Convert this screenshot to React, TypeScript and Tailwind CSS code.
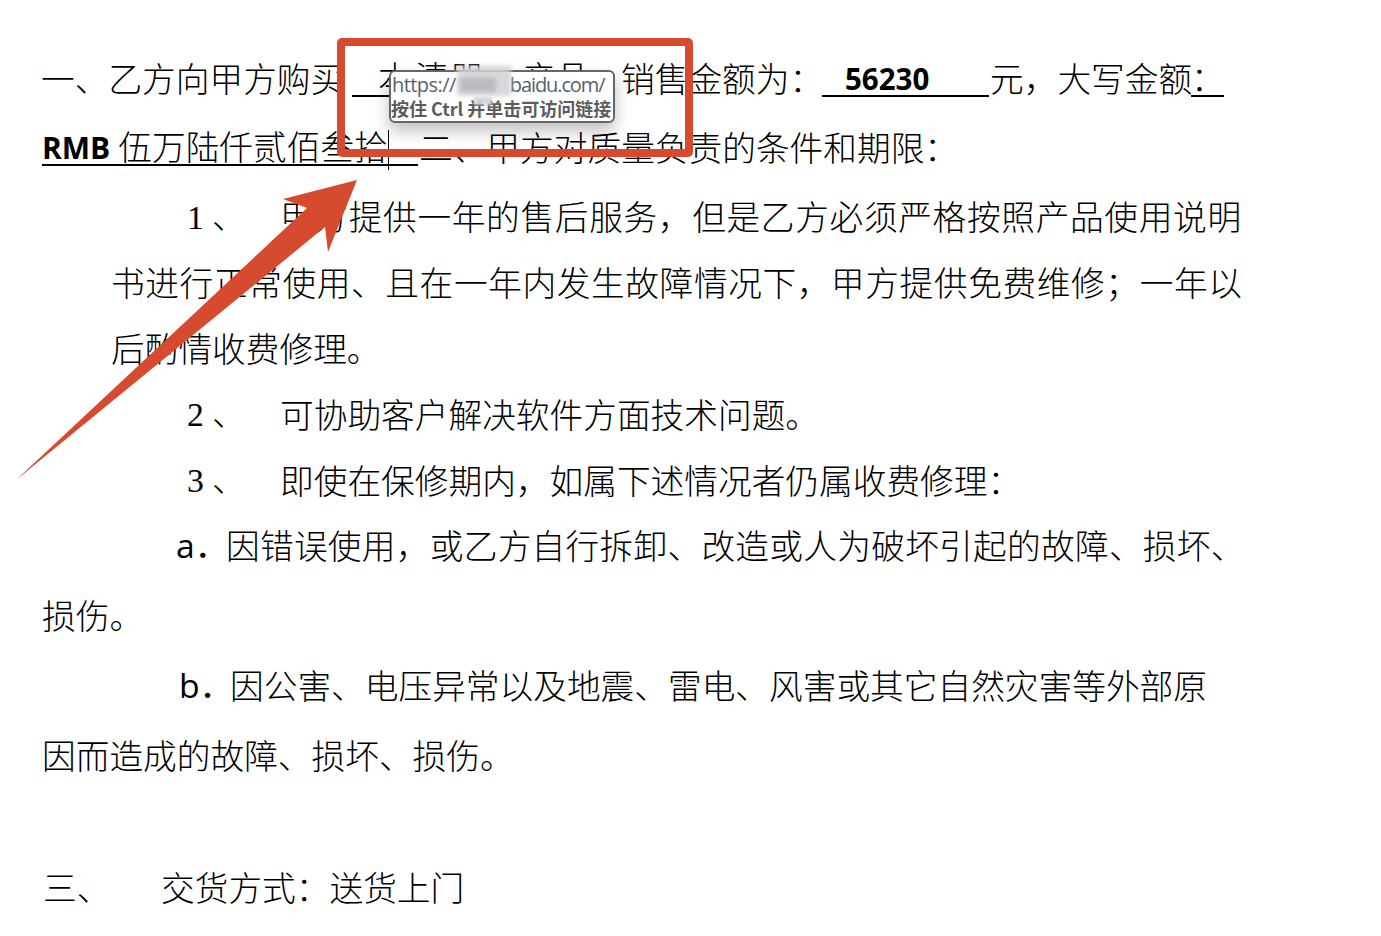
import React from "react";

const cjk = "font-['Noto_Sans_CJK_SC',sans-serif]";
const latin = "font-['Open_Sans','Noto_Sans_CJK_SC',sans-serif]";
const digit = "inline-block w-[25px] font-normal font-['Liberation_Serif',serif]";

function Under({ w, children, className = "" }: { w: string; children?: React.ReactNode; className?: string }) {
  return (
    <span className={`inline-flex shrink-0 items-center border-b-2 border-black h-[38px] leading-none ${w} ${className}`}>
      {children}
    </span>
  );
}

export default function App() {
  const line = "flex items-center whitespace-nowrap shrink-0";
  return (
    <div className={`relative w-[1381px] h-[936px] overflow-hidden bg-white text-black text-[33.7px] font-light ${cjk}`}>
      <div className="flex flex-col pt-[44px]">
        <div className={`${line} h-[68px] pl-[41px]`}>
          <span className="w-[311px]">一、乙方向甲方购买</span>
          <Under w="w-[262px]" className="pl-[26px]">
            <span className="w-[37px]">本</span>
            <span className="w-[35px]">清</span>
            <span className="w-[72px]">器</span>
            <span>产品</span>
          </Under>
          <span className="w-[7px]" />
          <span className="w-[201px]">销售金额为：</span>
          <Under w="w-[167px]" className={`pl-[23px] pt-[3px] font-bold text-[29.5px] ${latin}`}>56230</Under>
          <span className="pl-[1px] w-[202px]">元，大写金额</span>
          <Under w="w-[33px]">：</Under>
        </div>
        <div className={`${line} h-[70px] pl-[42px]`}>
          <Under w="w-[376px]">
            <span className={`font-bold text-[30px] mr-[8px] pt-[3px] ${latin}`}>RMB</span>
            伍万陆仟贰佰叁拾
          </Under>
          <span className="pl-[1px]">二、甲方对质量负责的条件和期限：</span>
        </div>
        <div className={`${line} h-[69px] pl-[187px]`}>
          <span className="w-[93px]"><span className={digit}>1</span>、</span>
          <span className="tracking-[0.66px]">甲方提供一年的售后服务，但是乙方必须严格按照产品使用说明</span>
        </div>
        <div className={`${line} h-[64px] pb-[2px] pl-[111px] tracking-[0.6px]`}>
          书进行正常使用、且在一年内发生故障情况下，甲方提供免费维修；一年以
        </div>
        <div className={`${line} h-[66px] pl-[111px]`}>后酌情收费修理。</div>
        <div className={`${line} h-[66px] pl-[187px]`}>
          <span className="w-[93px]"><span className={digit}>2</span>、</span>
          <span>可协助客户解决软件方面技术问题。</span>
        </div>
        <div className={`${line} h-[66px] pl-[187px]`}>
          <span className="w-[93px]"><span className={digit}>3</span>、</span>
          <span>即使在保修期内，如属下述情况者仍属收费修理：</span>
        </div>
        <div className={`${line} h-[64px] pl-[176px]`}>
          <span className={`w-[50px] ${latin} font-normal`}>a．</span>
          <span className="tracking-[0.27px]">因错误使用，或乙方自行拆卸、改造或人为破坏引起的故障、损坏、</span>
        </div>
        <div className={`${line} h-[76px] pl-[42px]`}>损伤。</div>
        <div className={`${line} h-[64px] pl-[179px]`}>
          <span className={`w-[51px] ${latin} font-normal`}>b．</span>
          <span>因公害、电压异常以及地震、雷电、风害或其它自然灾害等外部原</span>
        </div>
        <div className={`${line} h-[76px] pl-[42px]`}>因而造成的故障、损坏、损伤。</div>
        <div className="h-[60px] shrink-0" />
        <div className={`${line} h-[68px] pl-[43px]`}>
          <span className="w-[118px]">三、</span>
          <span>交货方式：送货上门</span>
        </div>
      </div>

      {/* text cursor */}
      <div className="absolute left-[388px] top-[130px] w-px h-[40px] bg-black" />

      {/* tooltip */}
      <div className="absolute left-[389px] top-[70px] w-[226px] h-[53px] rounded-[6px] border-2 border-[#666666] bg-white shadow-[0_8px_16px_rgba(0,0,0,0.25)] leading-none overflow-hidden">
        <div className="h-[25px] flex items-center pl-[1px] text-[20px] tracking-[-0.55px] font-normal text-[#55606e] font-['Open_Sans',sans-serif] whitespace-nowrap">
          <span>https://</span>
          <span className="w-[54px]" />
          <span className="tracking-[-1.1px]">baidu.com/</span>
        </div>
        <div className="h-[22px] flex items-center text-[18px] font-bold text-[#5c5c5c] whitespace-nowrap">
          按住 Ctrl 并单击可访问链接
        </div>
      </div>
      {/* blurred mosaic */}
      <div className="absolute left-[457px] top-[66px] w-[54px] h-[30px] bg-[#d2d2d6] opacity-85 blur-[2px]" />
      <div className="absolute left-[460px] top-[78px] w-[36px] h-[14px] bg-[#b4b4b8] opacity-80 blur-[2px]" />
      <div className="absolute left-[474px] top-[97px] w-[18px] h-[8px] bg-[#d4d4d4] opacity-90 blur-[1px]" />

      {/* red rectangle */}
      <div className="absolute left-[337px] top-[38px] w-[356px] h-[119px] border-[8px] border-[#d64b2f] rounded-[5px]" />

      {/* arrow */}
      <svg className="absolute left-0 top-0" width="1381" height="936" viewBox="0 0 1381 936">
        <polygon points="357,180 283,199 307,208 16,480 325,227 328,252" fill="#d64b2f" />
      </svg>
    </div>
  );
}
